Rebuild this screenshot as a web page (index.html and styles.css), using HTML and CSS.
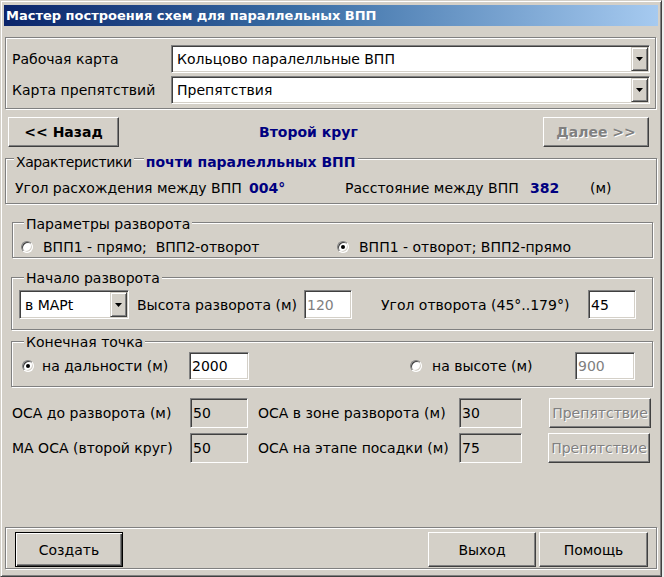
FILE: index.html
```html
<!DOCTYPE html>
<html lang="ru">
<head>
<meta charset="utf-8">
<title>Мастер построения схем для параллельных ВПП</title>
<link rel="stylesheet" href="styles.css">
</head>
<body>
<div class="window">
  <div class="titlebar">Мастер построения схем для параллельных ВПП</div>

  <div class="topframe etched">
    <div class="maprow">
      <span class="maplabel">Рабочая карта</span>
      <div class="field combo wide">
        <span class="combo-text">Кольцово паралелльные ВПП</span>
        <span class="combo-btn"><svg width="7" height="4" viewBox="0 0 7 4"><path d="M0 0h7L3.5 4z" fill="#000"/></svg></span>
      </div>
    </div>
    <div class="maprow">
      <span class="maplabel">Карта препятствий</span>
      <div class="field combo wide">
        <span class="combo-text">Препятствия</span>
        <span class="combo-btn"><svg width="7" height="4" viewBox="0 0 7 4"><path d="M0 0h7L3.5 4z" fill="#000"/></svg></span>
      </div>
    </div>
  </div>

  <div class="navrow">
    <div class="btn bold back">&lt;&lt; Назад</div>
    <div class="navtitle">Второй круг</div>
    <div class="btn bold disabled next">Далее &gt;&gt;</div>
  </div>

  <div class="etched chargroup">
    <div class="legendrow char-legend">
      <span class="legend tight">Характеристики</span>
      <span class="legend accent second">почти паралелльных ВПП</span>
    </div>
    <div class="datarow">
      <span class="c1">Угол расхождения между ВПП</span>
      <span class="c2 accent">004°</span>
      <span class="c3">Расстояние между ВПП</span>
      <span class="c4 accent">382</span>
      <span>(м)</span>
    </div>
  </div>

  <div class="etched paramgroup">
    <div class="legendrow param-legend"><span class="legend">Параметры разворота</span></div>
    <div class="radiorow">
      <div class="ritem r1"><span class="radio"></span><span>ВПП1 - прямо;&nbsp; ВПП2-отворот</span></div>
      <div class="ritem"><span class="radio on"></span><span>ВПП1 - отворот; ВПП2-прямо</span></div>
    </div>
  </div>

  <div class="etched startgroup">
    <div class="legendrow sub-legend"><span class="legend">Начало разворота</span></div>
    <div class="startrow">
      <div class="field combo small">
        <span class="combo-text">в MAPt</span>
        <span class="combo-btn"><svg width="7" height="4" viewBox="0 0 7 4"><path d="M0 0h7L3.5 4z" fill="#000"/></svg></span>
      </div>
      <span class="lab1">Высота разворота (м)</span>
      <div class="field w48 dis">120</div>
      <span class="lab2">Угол отворота (45°..179°)</span>
      <div class="field w48">45</div>
    </div>
  </div>

  <div class="etched endgroup">
    <div class="legendrow sub-legend"><span class="legend">Конечная точка</span></div>
    <div class="endrow">
      <div class="ritem ra"><span class="radio on"></span><span>на дальности (м)</span></div>
      <div class="field w60">2000</div>
      <div class="ritem rb"><span class="radio"></span><span>на высоте (м)</span></div>
      <div class="field w60 dis">900</div>
    </div>
  </div>

  <div class="ocarow">
    <span class="olab1">ОСА до разворота (м)</span>
    <div class="field ro w58">50</div>
    <span class="olab2">ОСА в зоне разворота (м)</span>
    <div class="field ro w63">30</div>
    <div class="btn disabled obtn">Препятствие</div>
  </div>
  <div class="ocarow">
    <span class="olab1">МА ОСА (второй круг)</span>
    <div class="field ro w58">50</div>
    <span class="olab2">ОСА на этапе посадки (м)</span>
    <div class="field ro w63">75</div>
    <div class="btn disabled obtn second">Препятствие</div>
  </div>

  <div class="etched bottompanel">
    <div class="btn default create">Создать</div>
    <div class="btn exit">Выход</div>
    <div class="btn help">Помощь</div>
  </div>
</div>
</body>
</html>
```
FILE: styles.css
```css
* { box-sizing: border-box; }

body {
  margin: 0;
  background: #ececec;
  font-family: "DejaVu Sans", "Noto Sans", sans-serif;
  font-size: 14px;
  line-height: 16px;
  color: #000;
}

.window {
  width: 662px;
  height: 577px;
  background: #d4d0c8;
  border: 1px solid;
  border-color: #d4d0c8 #404040 #404040 #d4d0c8;
  box-shadow: inset 1px 1px 0 #fff, inset -1px -1px 0 #808080;
  padding: 3px;
  display: flex;
  flex-direction: column;
  align-items: flex-start;
}

.titlebar {
  align-self: stretch;
  height: 21px;
  margin-top: 1px;
  padding-left: 2px;
  background: linear-gradient(to right, #0a246a 0%, #3a6ea5 45%, #a6caf0 100%);
  color: #fff;
  font-weight: bold;
  font-size: 13px;
  line-height: 21px;
  white-space: nowrap;
}

.etched {
  border: 1px solid #808080;
  box-shadow: 1px 1px 0 #fff, inset 1px 1px 0 #fff;
}

/* generic controls */
.field {
  background: #fff;
  border: 1px solid;
  border-color: #808080 #fff #fff #808080;
  box-shadow: inset 1px 1px 0 #404040, inset -1px -1px 0 #d4d0c8;
  padding-left: 2px;
  display: flex;
  align-items: center;
  flex: none;
  white-space: nowrap;
}
.field.dis { color: #808080; }
.field.ro { background: #d4d0c8; }

.combo { padding-left: 5px; }
.combo-text { flex: 1; white-space: nowrap; }
.combo-btn {
  width: 17px;
  align-self: stretch;
  margin: 1px 1px 1px 0;
  background: #d4d0c8;
  border: 1px solid;
  border-color: #d4d0c8 #404040 #404040 #d4d0c8;
  box-shadow: inset 1px 1px 0 #fff, inset -1px -1px 0 #808080;
  display: flex;
  align-items: center;
  justify-content: center;
  flex: none;
}

.btn {
  background: #d4d0c8;
  border: 1px solid;
  border-color: #fff #404040 #404040 #fff;
  box-shadow: inset -1px -1px 0 #808080;
  display: flex;
  align-items: center;
  justify-content: center;
  flex: none;
  white-space: nowrap;
}
.btn.bold { font-weight: bold; }
.btn.disabled { color: #808080; text-shadow: 1px 1px 0 #fff; }
.btn.default {
  border: 1px solid #000;
  box-shadow: inset 1px 1px 0 #fff, inset -1px -1px 0 #404040, inset -2px -2px 0 #808080;
}

.accent { color: #000080; font-weight: bold; }

.radio {
  position: relative;
  width: 12px;
  height: 12px;
  flex: none;
  border-radius: 50%;
  background: #fff;
  border: 1px solid;
  border-color: #808080 #fff #fff #808080;
  box-shadow: inset 1px 1px 0 #404040, inset -1px -1px 0 #d4d0c8;
}
.radio.on::after {
  content: "";
  position: absolute;
  left: 3px;
  top: 3px;
  width: 4px;
  height: 4px;
  border-radius: 50%;
  background: #000;
}

.legendrow { display: flex; align-items: flex-start; height: 16px; }
.legend {
  background: #d4d0c8;
  padding: 0 2px;
  white-space: nowrap;
}
.legend.tight { letter-spacing: -0.4px; }

/* top frame */
.topframe {
  width: 651px;
  height: 72px;
  margin: 11px 0 0 1px;
  padding: 7px 0 0 6px;
}
.maprow { display: flex; align-items: center; height: 28px; }
.maprow + .maprow { margin-top: 3px; }
.maplabel { width: 159px; white-space: nowrap; }
.combo.wide { width: 479px; height: 28px; }

/* navigation row */
.navrow {
  display: flex;
  align-items: center;
  width: 654px;
  height: 30px;
  margin-top: 8px;
}
.back { width: 111px; height: 30px; margin-left: 4px; }
.navtitle { margin-left: 140px; font-weight: bold; color: #000080; white-space: nowrap; }
.next { width: 106px; height: 30px; margin-left: auto; margin-right: 9px; }

/* characteristics */
.chargroup { width: 652px; height: 46px; margin: 11px 0 0 1px; }
.char-legend { margin: -5px 0 0 8px; }
.legend.second { margin-left: 10px; }
.datarow { display: flex; height: 16px; margin: 10px 0 0 9px; white-space: nowrap; }
.c1 { width: 234px; }
.c2 { width: 96px; }
.c3 { width: 185px; }
.c4 { width: 60px; }

/* parameters */
.paramgroup { width: 641px; height: 36px; margin: 18px 0 0 8px; }
.param-legend { margin: -7px 0 0 11px; }
.radiorow { display: flex; align-items: center; height: 16px; margin: 7px 0 0 8px; }
.ritem { display: flex; align-items: center; white-space: nowrap; flex: none; }
.ritem .radio { margin-right: 10px; }
.r1 { width: 316px; }

/* start of turn */
.startgroup { width: 642px; height: 53px; margin: 19px 0 0 7px; }
.sub-legend { margin: -8px 0 0 12px; }
.startrow { display: flex; align-items: center; height: 31px; margin: 3px 0 0 7px; }
.combo.small { width: 110px; height: 29px; }
.lab1 { width: 175px; padding-left: 8px; white-space: nowrap; }
.lab2 { width: 236px; padding-left: 29px; white-space: nowrap; }
.w48 { width: 48px; height: 29px; }

/* end point */
.endgroup { width: 642px; height: 46px; margin: 11px 0 0 7px; }
.endrow { display: flex; align-items: center; height: 28px; margin: 2px 0 0 10px; }
.ra { width: 167px; }
.ra .radio { margin-right: 8px; }
.rb { width: 165px; margin-left: 161px; }
.w60 { width: 60px; height: 28px; }

/* OCA rows */
.ocarow { display: flex; align-items: center; height: 30px; margin: 11px 0 0 8px; }
.ocarow + .ocarow { margin-top: 5px; }
.olab1 { width: 178px; white-space: nowrap; }
.olab2 { width: 211px; padding-left: 10px; white-space: nowrap; }
.w58 { width: 58px; height: 30px; }
.w63 { width: 63px; height: 30px; }
.obtn { width: 102px; height: 30px; margin-left: 27px; }
.obtn.second { margin-left: 26px; }

/* bottom panel */
.bottompanel {
  width: 652px;
  height: 42px;
  margin: 64px 0 0 1px;
  padding: 4px 8px 0 9px;
  display: flex;
  align-items: flex-start;
}
.create { width: 108px; height: 35px; }
.exit { width: 108px; height: 35px; margin-left: auto; }
.help { width: 109px; height: 35px; margin-left: 3px; }
```
